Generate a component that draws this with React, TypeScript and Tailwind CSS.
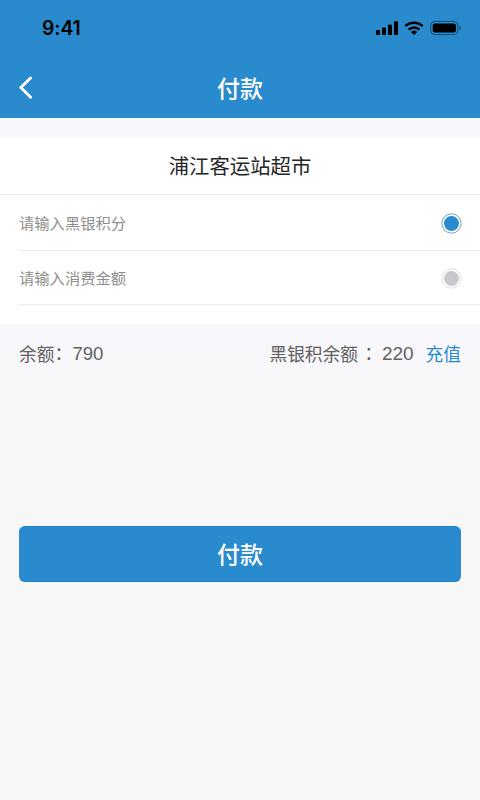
import clsx from "clsx";

const FIELDS = [
  { id: "points", placeholder: "请输入黑银积分", selected: true, height: "h-[56px]" },
  { id: "amount", placeholder: "请输入消费金额", selected: false, height: "h-[54px]" },
];

function StatusBar() {
  return (
    <div className="flex h-[56px] items-center justify-between pr-[18px] pl-[42px] text-black">
      <span className="pt-[2px] font-['Inter'] text-[19.4px] leading-none font-semibold tracking-[-0.1px]">
        9:41
      </span>
      <div className="flex h-[16px] items-center">
        {/* 信号 */}
        <svg width="22" height="14" viewBox="0 0 22 14" fill="currentColor" aria-hidden="true">
          <rect x="0" y="9" width="4" height="5" rx="1" />
          <rect x="6" y="6.6" width="4" height="7.4" rx="1" />
          <rect x="12" y="3.6" width="4" height="10.4" rx="1" />
          <rect x="18" y="0.3" width="4" height="13.7" rx="1" />
        </svg>
        {/* Wi-Fi */}
        <svg className="ml-[6px]" width="20" height="14" viewBox="0 0 20 14" aria-hidden="true">
          <g fill="none" stroke="currentColor" strokeWidth="2.5">
            <path d="M1.3 5.2a12.4 12.4 0 0 1 17.4 0" />
            <path d="M4.6 8.7a7.7 7.7 0 0 1 10.8 0" />
          </g>
          <path d="M6.9 10.9a4.5 4.5 0 0 1 6.2 0L10 14z" fill="currentColor" />
        </svg>
        {/* 电池 */}
        <svg className="ml-[6px]" width="32" height="16" viewBox="0 0 32 16" aria-hidden="true">
          <rect x="0.8" y="1.4" width="27" height="13.2" rx="4" fill="none" stroke="currentColor" strokeOpacity="0.45" />
          <rect x="2.7" y="3.4" width="23.2" height="9.2" rx="2" fill="currentColor" />
          <path d="M29.6 5.6v4.8c1.9-.8 1.9-4 0-4.8z" fill="currentColor" fillOpacity="0.5" />
        </svg>
      </div>
    </div>
  );
}

function Radio({ selected }: { selected: boolean }) {
  return (
    <svg width="21" height="21" viewBox="0 0 21 21" aria-hidden="true">
      <circle cx="10.5" cy="10.5" r="9.7" fill="#ffffff" stroke={selected ? "#6f9fb8" : "#dcdcdf"} />
      <circle cx="10.5" cy="10.5" r="7.5" fill={selected ? "#288bce" : "#c8c7cc"} />
    </svg>
  );
}

export default function App() {
  return (
    <div className="h-[800px] w-[480px] overflow-hidden bg-gradient-to-b from-[#f8f7fb] from-40% to-[#f7f7f7] to-75% font-['Noto_Sans_CJK_SC',sans-serif]">
      <header className="h-[118px] bg-[#298bce]">
        <StatusBar />
        <div className="grid h-[62px] grid-cols-[60px_1fr_60px] items-center">
          <button type="button" aria-label="返回" className="pl-[18px] text-white">
            <svg width="16" height="24" viewBox="0 0 16 24" fill="none" stroke="currentColor" strokeWidth="2.8" strokeLinecap="round" strokeLinejoin="round">
              <path d="M12.6 3L2.8 12.6L12.6 22.2" />
            </svg>
          </button>
          <h1 className="text-center text-[23px] leading-none font-medium text-white">付款</h1>
        </div>
      </header>

      <main>
        <section className="mt-5 h-[186px] bg-white">
          <h2 className="flex h-[57px] items-center justify-center border-b border-[#ebebee] pb-[2px] text-[20.4px] leading-none text-[#262626]">
            浦江客运站超市
          </h2>
          {FIELDS.map((field) => (
            <label
              key={field.id}
              className={clsx(
                "ml-[19px] flex items-center justify-between border-b border-[#ebebee] pt-px pr-[18px] text-[15.3px] leading-none text-[#8e8e8e]",
                field.height
              )}
            >
              {field.placeholder}
              <Radio selected={field.selected} />
            </label>
          ))}
        </section>

        {/* 余额 */}
        <section className="flex h-[60px] items-center justify-between px-[19px] text-[17.7px] leading-none text-[#606060]">
          <p className="flex items-center">
            余额
            <span className="w-[18px] pb-[2px]">：</span>
            <span className="font-['Liberation_Sans'] text-[18.6px]">790</span>
          </p>
          <p className="flex items-center">
            黑银积余额
            <span className="ml-[2px] w-[22px] font-['Noto_Sans_CJK_TC']">：</span>
            <span className="pb-px font-['Liberation_Sans'] text-[19px]">220</span>
            <a className="ml-3 text-[#288bce]">充值</a>
          </p>
        </section>

        <div className="mt-[142px] px-[19px]">
          <button
            type="button"
            className="h-[56px] w-full rounded-md border-y border-[#2380c4] bg-[#298bce] pb-px text-[23px] leading-none font-medium text-white"
          >
            付款
          </button>
        </div>
      </main>
    </div>
  );
}
